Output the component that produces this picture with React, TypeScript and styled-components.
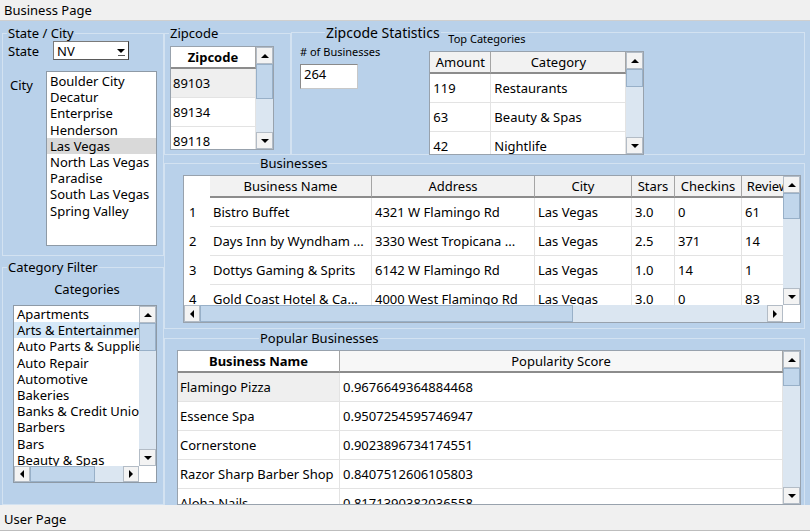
import React from 'react';
import styled, { createGlobalStyle } from 'styled-components';

const GlobalStyle = createGlobalStyle`
  html, body { margin: 0; padding: 0; }
  body {
    font-family: "Noto Sans", "Open Sans", sans-serif;
    font-size: 13px;
    color: #000;
    overflow: hidden;
  }
  * { box-sizing: border-box; }
`;

const Frame = styled.div`
  width: 810px;
  height: 531px;
  display: flex;
  flex-direction: column;
  background: #f0f0f0;
  overflow: hidden;
`;

const PaneTitle = styled.div<{ $bottom?: boolean }>`
  flex: 0 0 ${p => (p.$bottom ? 26 : 21)}px;
  padding: ${p => (p.$bottom ? '3px 4px 0' : '0 4px')};
  display: flex;
  align-items: center;
  font-size: 13px;
  line-height: 16px;
  background: #f0f0f0;
  border-bottom: 1px solid ${p => (p.$bottom ? '#bdbdbd' : '#cfcfcf')};
`;

const Body = styled.div`
  flex: 0 0 484px;
  display: flex;
  background: #b9d1ea;
  overflow: hidden;
`;

const LeftCol = styled.div`
  flex: 0 0 164px;
  padding-left: 2px;
  display: flex;
  flex-direction: column;
`;

const RightCol = styled.div`
  flex: 1;
  padding-right: 5px;
  display: flex;
  flex-direction: column;
  min-width: 0;
`;

const Group = styled.fieldset<{ $h?: number; $top?: number; $w?: number; $grow?: boolean }>`
  margin: ${p => p.$top ?? 0}px 0 0 0;
  padding: 0;
  min-width: 0;
  min-height: 0;
  border: 1px solid #d3e2f1;
  display: flex;
  flex-direction: column;
  flex: ${p => (p.$grow ? '1 1 0' : '0 0 auto')};
  ${p => (p.$h ? `height: ${p.$h}px;` : '')}
  ${p => (p.$w ? `width: ${p.$w}px;` : '')}
`;

const Legend = styled.legend<{ $indent: number; $size?: number }>`
  margin-left: ${p => p.$indent}px;
  padding: 0 1px;
  font-size: ${p => p.$size ?? 13}px;
  line-height: ${p => (p.$size ?? 13) + 3}px;
`;

/* ---------- State / City ---------- */

const StateRow = styled.div`
  display: flex;
  height: 19px;
  align-items: center;
`;

const FieldLabel = styled.div<{ $w: number; $pad: number }>`
  flex: 0 0 ${p => p.$w}px;
  padding-left: ${p => p.$pad}px;
  line-height: 16px;
`;

const Combo = styled.div`
  width: 76px;
  height: 19px;
  background: #fff;
  border: 1px solid #7a7a7a;
  border-right-color: #3c3c3c;
  border-bottom-color: #5a5a5a;
  display: flex;
  align-items: center;
  justify-content: space-between;
  padding: 0 3px 0 3px;
  line-height: 16px;
`;

const ComboMark = styled.div`
  display: flex;
  flex-direction: column;
  align-items: center;
  gap: 1px;
  padding-top: 3px;
`;

const ComboLine = styled.div`
  width: 7px;
  height: 1px;
  background: #555;
`;

const CityRow = styled.div`
  display: flex;
  margin-top: 11px;
`;

const CityLabel = styled(FieldLabel)`
  padding-top: 6px;
`;

const ListBox = styled.div<{ $w: number; $h: number }>`
  width: ${p => p.$w}px;
  height: ${p => p.$h}px;
  flex-shrink: 0;
  background: #fff;
  border: 1px solid #8e9aa6;
  overflow: hidden;
`;

const CityList = styled.div`
  padding-top: 1px;
`;

const ListItem = styled.div<{ $sel?: 'gray' | 'blue' }>`
  height: 16.2px;
  line-height: 16px;
  padding-left: 3px;
  white-space: nowrap;
  overflow: hidden;
  background: ${p => (p.$sel === 'gray' ? '#d9d9d9' : p.$sel === 'blue' ? '#d5e8f8' : 'transparent')};
`;

/* ---------- Category ---------- */

const CatTitle = styled.div`
  margin-top: 6px;
  line-height: 16px;
  text-align: center;
  padding-left: 8px;
`;

const CatBox = styled(ListBox)`
  margin: 8px 0 0 10px;
  display: grid;
  grid-template-columns: 1fr 17px;
  grid-template-rows: 1fr 16px;
`;

const CatItems = styled.div`
  overflow: hidden;
  min-width: 0;
`;

const Corner = styled.div`
  background: #fff;
`;

/* ---------- Scrollbars ---------- */

type Dir = 'up' | 'down' | 'left' | 'right';

const Tri = ({ dir }: { dir: Dir }) => {
  const v = dir === 'up' || dir === 'down';
  const pts = {
    up: '0,5 4,1 8,5',
    down: '0,1 4,5 8,1',
    left: '5,0 1,4 5,8',
    right: '1,0 5,4 1,8',
  }[dir];
  return (
    <svg width={v ? 8 : 6} height={v ? 6 : 8} viewBox={v ? '0 0 8 6' : '0 0 6 8'}>
      <polygon points={pts} fill="#000" />
    </svg>
  );
};

const ScrollBox = styled.div<{ $v: boolean }>`
  display: flex;
  flex-direction: ${p => (p.$v ? 'column' : 'row')};
  background: #dbe6f1;
  min-width: 0;
  min-height: 0;
`;

const ArrowBtn = styled.div<{ $v: boolean }>`
  flex: 0 0 ${p => (p.$v ? 17 : 16)}px;
  display: flex;
  align-items: center;
  justify-content: center;
  background: #f3f3f3;
  border: 1px solid #b3bcc6;
`;

const Track = styled.div<{ $v: boolean }>`
  flex: 1;
  display: flex;
  flex-direction: ${p => (p.$v ? 'column' : 'row')};
  min-width: 0;
  min-height: 0;
`;

const Thumb = styled.div`
  flex-shrink: 0;
  background: #c1d6eb;
  border: 1px solid #98b0c8;
`;

const ScrollBar = ({ v, start, size }: { v?: boolean; start: number; size: number }) => {
  const vert = !!v;
  return (
    <ScrollBox $v={vert}>
      <ArrowBtn $v={vert}>
        <Tri dir={vert ? 'up' : 'left'} />
      </ArrowBtn>
      <Track $v={vert}>
        <Thumb style={vert ? { marginTop: start, height: size } : { marginLeft: start, width: size }} />
      </Track>
      <ArrowBtn $v={vert}>
        <Tri dir={vert ? 'down' : 'right'} />
      </ArrowBtn>
    </ScrollBox>
  );
};

/* ---------- Tables ---------- */

const TableBox = styled.div<{ $w: number; $h: number; $hs?: boolean; $m: string }>`
  width: ${p => p.$w}px;
  height: ${p => p.$h}px;
  margin: ${p => p.$m};
  flex-shrink: 0;
  background: #fff;
  border: 1px solid #98a2ad;
  display: grid;
  grid-template-columns: 1fr 17px;
  grid-template-rows: ${p => (p.$hs ? '1fr 17px' : '1fr')};
  overflow: hidden;
`;

const TableMain = styled.div`
  overflow: hidden;
  min-width: 0;
  min-height: 0;
`;

const HeadRow = styled.div<{ $cols: string }>`
  display: grid;
  grid-template-columns: ${p => p.$cols};
  height: 22px;
`;

const HeadCell = styled.div<{ $bg?: string; $bold?: boolean; $blank?: boolean }>`
  display: flex;
  align-items: center;
  justify-content: center;
  white-space: nowrap;
  overflow: hidden;
  line-height: 16px;
  font-weight: ${p => (p.$bold ? 700 : 400)};
  background: ${p => p.$bg ?? '#f2f2f2'};
  border-right: 1px solid ${p => (p.$blank ? 'transparent' : '#a5a5a5')};
  border-bottom: 2px solid ${p => (p.$blank ? 'transparent' : '#8c8c8c')};
`;

const Row = styled.div<{ $cols: string }>`
  display: grid;
  grid-template-columns: ${p => p.$cols};
  height: 29px;
`;

const Cell = styled.div<{ $pad?: number; $bg?: string; $plain?: boolean }>`
  display: flex;
  align-items: center;
  padding-left: ${p => p.$pad ?? 3}px;
  white-space: nowrap;
  overflow: hidden;
  line-height: 16px;
  background: ${p => p.$bg ?? 'transparent'};
  border-right: 1px solid ${p => (p.$plain ? 'transparent' : '#e3e3e3')};
  border-bottom: 1px solid ${p => (p.$plain ? 'transparent' : '#e3e3e3')};
`;

/* ---------- Stats ---------- */

const TopRow = styled.div`
  display: flex;
  height: 134px;
  flex-shrink: 0;
`;

const StatsBody = styled.div`
  display: flex;
  align-items: flex-start;
`;

const CountBlock = styled.div`
  padding-left: 8px;
  margin-top: 4px;
  display: flex;
  flex-direction: column;
`;

const SmallLabel = styled.div<{ $indent?: number }>`
  font-size: 11px;
  line-height: 14px;
  padding-left: ${p => p.$indent ?? 0}px;
`;

const NumField = styled.div`
  margin-top: 5px;
  width: 58px;
  height: 25px;
  background: #fff;
  border: 1px solid #8a8a8a;
  border-right-color: #c8c8c8;
  border-bottom-color: #c8c8c8;
  padding: 1px 0 0 3px;
  line-height: 16px;
`;

const TopCatBlock = styled.div`
  margin: -9px 0 0 49px;
  display: flex;
  flex-direction: column;
`;

/* ---------- data ---------- */

const cities = ['Boulder City', 'Decatur', 'Enterprise', 'Henderson', 'Las Vegas', 'North Las Vegas', 'Paradise', 'South Las Vegas', 'Spring Valley'];
const categories = ['Apartments', 'Arts & Entertainment', 'Auto Parts & Supplies', 'Auto Repair', 'Automotive', 'Bakeries', 'Banks & Credit Unions', 'Barbers', 'Bars', 'Beauty & Spas', 'Bikes'];
const zipcodes = ['89103', '89134', '89118', '89117'];
const topCats = [['119', 'Restaurants'], ['63', 'Beauty & Spas'], ['42', 'Nightlife']];
const businesses = [
  ['1', 'Bistro Buffet', '4321 W Flamingo Rd', 'Las Vegas', '3.0', '0', '61'],
  ['2', 'Days Inn by Wyndham ...', '3330 West Tropicana ...', 'Las Vegas', '2.5', '371', '14'],
  ['3', 'Dottys Gaming & Sprits', '6142 W Flamingo Rd', 'Las Vegas', '1.0', '14', '1'],
  ['4', 'Gold Coast Hotel & Ca...', '4000 West Flamingo Rd', 'Las Vegas', '3.0', '0', '83'],
];
const popular = [
  ['Flamingo Pizza', '0.9676649364884468'],
  ['Essence Spa', '0.9507254595746947'],
  ['Cornerstone', '0.9023896734174551'],
  ['Razor Sharp Barber Shop', '0.8407512606105803'],
  ['Aloha Nails', '0.8171390382036558'],
];

const bizCols = '26px 162px 163px 97px 43px 67px 59px';
const popCols = '162px 1fr';

export default function App() {
  return (
    <Frame>
      <GlobalStyle />
      <PaneTitle>Business Page</PaneTitle>
      <Body>
        <LeftCol>
          <Group $top={4} $h={231}>
            <Legend $indent={4}>State / City</Legend>
            <StateRow>
              <FieldLabel $w={50} $pad={5}>State</FieldLabel>
              <Combo>
                NV
                <ComboMark>
                  <Tri dir="down" />
                  <ComboLine />
                </ComboMark>
              </Combo>
            </StateRow>
            <CityRow>
              <CityLabel $w={43} $pad={7}>City</CityLabel>
              <ListBox $w={111} $h={175}>
                <CityList>
                  {cities.map((c, i) => (
                    <ListItem key={c} $sel={i === 4 ? 'gray' : undefined}>{c}</ListItem>
                  ))}
                </CityList>
              </ListBox>
            </CityRow>
          </Group>
          <Group $top={3} $grow>
            <Legend $indent={4}>Category Filter</Legend>
            <CatTitle>Categories</CatTitle>
            <CatBox $w={144} $h={178}>
              <CatItems>
                {categories.map((c, i) => (
                  <ListItem key={c} $sel={i === 1 ? 'blue' : undefined}>{c}</ListItem>
                ))}
              </CatItems>
              <ScrollBar v start={0} size={28} />
              <ScrollBar start={0} size={65} />
              <Corner />
            </CatBox>
          </Group>
        </LeftCol>

        <RightCol>
          <TopRow>
            <Group $top={4} $w={127} $h={130}>
              <Legend $indent={4}>Zipcode</Legend>
              <TableBox $w={104} $h={104} $m="5px 0 0 5px">
                <TableMain>
                  <HeadRow $cols="1fr">
                    <HeadCell $bg="#fff" $bold>Zipcode</HeadCell>
                  </HeadRow>
                  {zipcodes.map((z, i) => (
                    <Row key={z} $cols="1fr">
                      <Cell $pad={2} $bg={i === 0 ? '#efefef' : undefined}>{z}</Cell>
                    </Row>
                  ))}
                </TableMain>
                <ScrollBar v start={0} size={35} />
              </TableBox>
            </Group>
            <Group $top={3} $h={131} $grow>
              <Legend $indent={33} $size={14}>Zipcode Statistics</Legend>
              <StatsBody>
                <CountBlock>
                  <SmallLabel># of Businesses</SmallLabel>
                  <NumField>264</NumField>
                </CountBlock>
                <TopCatBlock>
                  <SmallLabel $indent={19}>Top Categories</SmallLabel>
                  <TableBox $w={215} $h={104} $m="5px 0 0 0">
                    <TableMain>
                      <HeadRow $cols="61px 1fr">
                        <HeadCell>Amount</HeadCell>
                        <HeadCell>Category</HeadCell>
                      </HeadRow>
                      {topCats.map(r => (
                        <Row key={r[1]} $cols="61px 1fr">
                          <Cell>{r[0]}</Cell>
                          <Cell>{r[1]}</Cell>
                        </Row>
                      ))}
                    </TableMain>
                    <ScrollBar v start={0} size={18} />
                  </TableBox>
                </TopCatBlock>
              </StatsBody>
            </Group>
          </TopRow>

          <Group $h={174}>
            <Legend $indent={94}>Businesses</Legend>
            <TableBox $w={618} $h={148} $hs $m="4px 0 0 18px">
              <TableMain>
                <HeadRow $cols={bizCols}>
                  <HeadCell $bg="#fff" $blank />
                  <HeadCell>Business Name</HeadCell>
                  <HeadCell>Address</HeadCell>
                  <HeadCell>City</HeadCell>
                  <HeadCell>Stars</HeadCell>
                  <HeadCell>Checkins</HeadCell>
                  <HeadCell>Reviews</HeadCell>
                </HeadRow>
                {businesses.map(r => (
                  <Row key={r[0]} $cols={bizCols}>
                    {r.map((c, i) => (
                      <Cell key={i} $pad={i === 0 ? 5 : 3} $plain={i === 0}>{c}</Cell>
                    ))}
                  </Row>
                ))}
              </TableMain>
              <ScrollBar v start={0} size={26} />
              <ScrollBar start={0} size={373} />
              <Corner />
            </TableBox>
          </Group>

          <Group $top={1} $h={200}>
            <Legend $indent={94}>Popular Businesses</Legend>
            <TableBox $w={624} $h={155} $m="4px 0 0 12px">
              <TableMain>
                <HeadRow $cols={popCols}>
                  <HeadCell $bg="#fff" $bold>Business Name</HeadCell>
                  <HeadCell $bg="#f7f7f7">Popularity Score</HeadCell>
                </HeadRow>
                {popular.map((r, i) => (
                  <Row key={r[0]} $cols={popCols}>
                    <Cell $pad={2} $bg={i === 0 ? '#efefef' : undefined}>{r[0]}</Cell>
                    <Cell>{r[1]}</Cell>
                  </Row>
                ))}
              </TableMain>
              <ScrollBar v start={0} size={18} />
            </TableBox>
          </Group>
        </RightCol>
      </Body>
      <PaneTitle $bottom>User Page</PaneTitle>
    </Frame>
  );
}
